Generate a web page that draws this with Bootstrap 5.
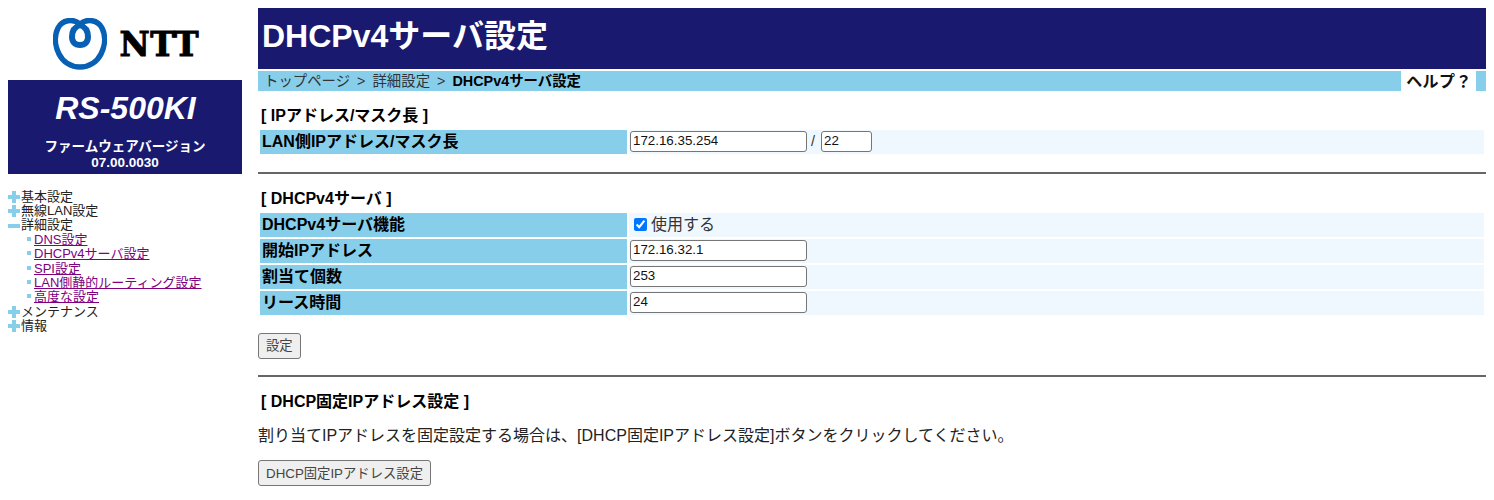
<!DOCTYPE html>
<html lang="ja">
<head>
<meta charset="utf-8">
<title>DHCPv4サーバ設定</title>
<link rel="stylesheet" href="https://cdn.jsdelivr.net/npm/bootstrap@5.3.0/dist/css/bootstrap.min.css">
<style>
body{margin:0;font-family:"Liberation Sans","Noto Sans CJK JP",sans-serif;font-size:16px;line-height:1.15;color:#000;background:#fff}
.shell{padding:8px;gap:16px;height:500px;overflow:hidden}
.side{width:234px;flex:none}
.brandlogo{height:72px;gap:13px}
.nttword{font-family:"DejaVu Serif",serif;font-weight:700;font-size:33px;line-height:33px;width:78px;letter-spacing:.5px;-webkit-text-stroke:1px #000;white-space:nowrap}
.model{background:#191970;color:#fff;height:94px;text-align:center;font-weight:700}
.modelname{font-size:32px;font-style:italic;padding-top:12px;line-height:32px;height:59px;padding-left:1px}
.fw{font-size:13.5px;line-height:16px}
.tree{margin-top:15.6px;font-size:13px;line-height:14.4px;color:#222}
.tree a{color:#800080;text-decoration:underline}
.tree-sub{padding-left:19px}
.tree-dot{width:4px;height:4px;background:#87ceeb;margin-right:3px;display:inline-block;vertical-align:3px}
.tree-ic{width:12px;height:12px;flex:none;margin-right:1px}
.mainpane{flex:1;min-width:0}
.pagehead{background:#191970;color:#fff;height:61px;font-size:32px;font-weight:700;line-height:57px;padding-left:4px;margin-bottom:2px}
.crumbs{background:#87ceeb;height:20px;font-size:14.4px;line-height:20px;padding-left:6px;color:#333;word-spacing:3px}
.crumbs b{color:#000}
.helpbox{background:#fff;color:#111;font-weight:700;font-size:16px;width:75px;height:20px;margin-right:10px;padding-left:1px;text-align:center;line-height:22px;letter-spacing:.4px}
.sect{font-size:16px;line-height:17px;font-weight:700;padding-left:3px;margin:0}
.cfg{border-collapse:separate;border-spacing:2px;width:100%;table-layout:fixed}
.cfg th{background:#87ceeb;width:367px;height:24px;padding:1px 2px 0;font-size:16px;font-weight:700;vertical-align:middle}
.cfg td{background:#f0f8ff;padding:0 0 0 1px;height:24px;vertical-align:middle;color:#333;font-size:14.4px}
.cfgfield{height:21px;border:1px solid #767676;border-radius:3px;padding:1px 2px;font-size:13.33px;font-family:inherit;color:#111;display:inline-block;background:#fff;vertical-align:middle;margin-bottom:2px}
.w177{width:177px}.w51{width:51px;margin-left:2px}
.rule{border:0;height:2px;background:#666;opacity:1;margin:0}
.chk{width:13px;height:13px;margin:0 4px 0 4px;vertical-align:-1px;accent-color:#0075ff}
.usetext{font-size:16px;color:#333}
.plainbtn{background:#efefef;border:1px solid #767676;border-radius:3px;color:#444;font-size:13.33px;height:26px;padding:0 7px;font-family:inherit;display:block}
.copytext{font-size:16px;line-height:17.4px;padding-top:1px;color:#222;margin:0}
</style>
</head>
<body>
<div class="d-flex shell">
  <div class="side">
    <div class="brandlogo d-flex align-items-center justify-content-center">
      <svg width="54" height="52" viewBox="0 0 54 52" aria-hidden="true"><g fill="none" stroke="#0860b4"><path stroke-width="5.5" d="M27 6C20 0 9 2 5 10C1 18 2 28 6 36C10 44 18 49 27 49C36 49 44 44 48 36C52 28 53 18 49 10C45 2 34 0 27 6Z"/><path stroke-width="6" d="M27 7C21 9 19 14 19 19C19 24 22 27 27 27C32 27 35 24 35 19C35 14 33 9 27 7Z"/></g></svg>
      <span class="nttword">NTT</span>
    </div>
    <div class="model">
      <div class="modelname">RS-500KI</div>
      <div class="fw">ファームウェアバージョン<br>07.00.0030</div>
    </div>
    <div class="tree">
      <div class="d-flex align-items-center"><svg class="tree-ic" viewBox="0 0 12 12"><path fill="#87ceeb" d="M4 0h4v4h4v4H8v4H4V8H0V4h4z"/></svg>基本設定</div>
      <div class="d-flex align-items-center"><svg class="tree-ic" viewBox="0 0 12 12"><path fill="#87ceeb" d="M4 0h4v4h4v4H8v4H4V8H0V4h4z"/></svg>無線LAN設定</div>
      <div class="d-flex align-items-center"><svg class="tree-ic" viewBox="0 0 12 12"><path fill="#87ceeb" d="M0 4h12v4H0z"/></svg>詳細設定</div>
      <div class="tree-sub"><span class="tree-dot"></span><a href="#">DNS設定</a></div>
      <div class="tree-sub"><span class="tree-dot"></span><a href="#">DHCPv4サーバ設定</a></div>
      <div class="tree-sub"><span class="tree-dot"></span><a href="#">SPI設定</a></div>
      <div class="tree-sub"><span class="tree-dot"></span><a href="#">LAN側静的ルーティング設定</a></div>
      <div class="tree-sub"><span class="tree-dot"></span><a href="#">高度な設定</a></div>
      <div class="d-flex align-items-center"><svg class="tree-ic" viewBox="0 0 12 12"><path fill="#87ceeb" d="M4 0h4v4h4v4H8v4H4V8H0V4h4z"/></svg>メンテナンス</div>
      <div class="d-flex align-items-center"><svg class="tree-ic" viewBox="0 0 12 12"><path fill="#87ceeb" d="M4 0h4v4h4v4H8v4H4V8H0V4h4z"/></svg>情報</div>
    </div>
  </div>
  <div class="mainpane">
    <div class="pagehead">DHCPv4サーバ設定</div>
    <div class="crumbs d-flex justify-content-between">
      <div>トップページ &gt; 詳細設定 &gt; <b>DHCPv4サーバ設定</b></div>
      <div class="helpbox">ヘルプ？</div>
    </div>
    <p class="sect mt-3 mb-1">[ IPアドレス/マスク長 ]</p>
    <table class="cfg">
      <tr><th>LAN側IPアドレス/マスク長</th><td><span class="cfgfield w177">172.16.35.254</span> / <span class="cfgfield w51">22</span></td></tr>
    </table>
    <hr class="rule mt-3">
    <p class="sect mt-3 mb-1">[ DHCPv4サーバ ]</p>
    <table class="cfg">
      <tr><th>DHCPv4サーバ機能</th><td><input class="chk" type="checkbox" checked aria-label="使用する"><span class="usetext">使用する</span></td></tr>
      <tr><th>開始IPアドレス</th><td><span class="cfgfield w177">172.16.32.1</span></td></tr>
      <tr><th>割当て個数</th><td><span class="cfgfield w177">253</span></td></tr>
      <tr><th>リース時間</th><td><span class="cfgfield w177">24</span></td></tr>
    </table>
    <button class="plainbtn mt-3" type="button">設定</button>
    <hr class="rule mt-3">
    <p class="sect mt-3">[ DHCP固定IPアドレス設定 ]</p>
    <p class="copytext mt-3">割り当てIPアドレスを固定設定する場合は、[DHCP固定IPアドレス設定]ボタンをクリックしてください。</p>
    <button class="plainbtn mt-3" type="button">DHCP固定IPアドレス設定</button>
  </div>
</div>
<script src="https://cdn.jsdelivr.net/npm/bootstrap@5.3.0/dist/js/bootstrap.bundle.min.js"></script>
</body>
</html>
